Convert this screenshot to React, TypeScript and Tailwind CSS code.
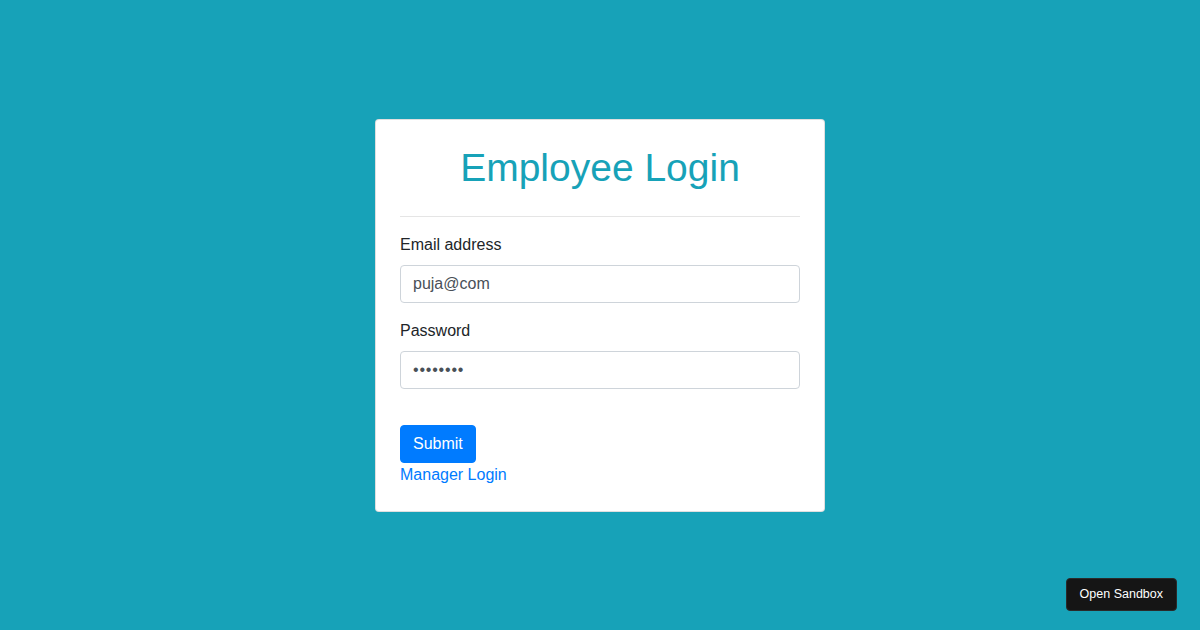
import React from "react";

const App: React.FC = () => {
  return (
    <div
      className="relative w-full h-[630px] bg-[#17a2b8] flex items-center justify-center text-[#212529]"
      style={{ fontFamily: '"Liberation Sans", Arial, sans-serif' }}
    >
      <div className="w-[450px] bg-white border border-[rgba(0,0,0,0.125)] rounded-[4px] p-6">
        <h1 className="text-[39px] leading-[48px] text-center text-[#17a2b8] mb-2">
          Employee Login
        </h1>
        <hr className="mt-6 mb-4 border-0 border-t border-[rgba(0,0,0,0.1)]" />

        <form onSubmit={(e) => e.preventDefault()}>
          <div className="mb-4">
            <label className="block text-base leading-6 mb-2">Email address</label>
            <input
              type="email"
              defaultValue="puja@com"
              className="block w-full h-[38px] px-3 text-base text-[#495057] border border-[#ced4da] rounded-[4px] outline-none"
            />
          </div>
          <div className="mb-4">
            <label className="block text-base leading-6 mb-2">Password</label>
            <input
              type="password"
              defaultValue="12345678"
              className="block w-full h-[38px] px-3 text-base tracking-[0.8px] text-[#495057] border border-[#ced4da] rounded-[4px] outline-none"
            />
          </div>

          <button
            type="submit"
            className="mt-5 h-[38px] px-3 text-base text-white bg-[#007bff] border border-[#007bff] rounded-[4px]"
          >
            Submit
          </button>
          <div className="leading-6">
            <a href="#" className="text-[#007bff] text-base">
              Manager Login
            </a>
          </div>
        </form>
      </div>

      <button className="absolute right-[23px] bottom-[19px] h-[33px] px-[13px] bg-[#151515] text-white text-[12.5px] rounded-[4px] border border-[#2a2a2a]">
        Open Sandbox
      </button>
    </div>
  );
};

export default App;
